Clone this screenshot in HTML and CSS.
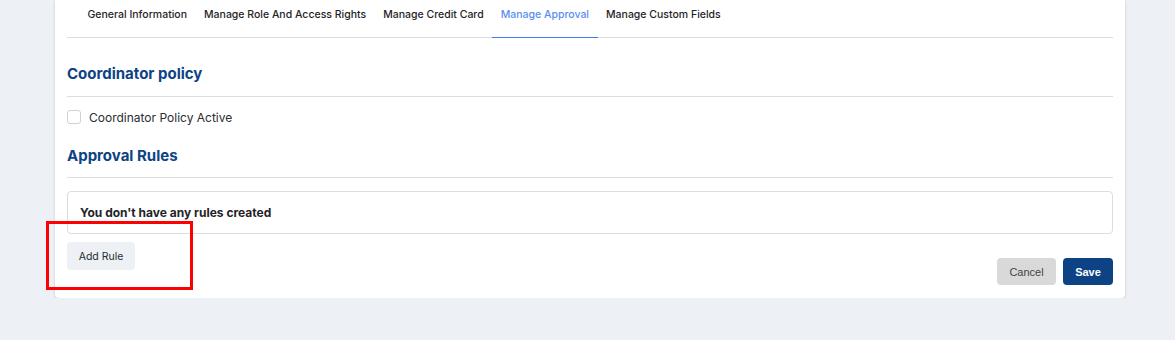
FILE: index.html
```html
<!DOCTYPE html>
<html lang="en">
<head>
    <meta charset="UTF-8">
    <meta name="viewport" content="width=device-width, initial-scale=1.0">
    <title>Manage Approval</title>
    <link rel="stylesheet" href="styles.css">
</head>
<body>
    <div class="card">
        <nav class="tabs">
            <a class="tab">General Information</a>
            <a class="tab">Manage Role And Access Rights</a>
            <a class="tab">Manage Credit Card</a>
            <a class="tab active">Manage Approval</a>
            <a class="tab">Manage Custom Fields</a>
        </nav>

        <section class="block">
            <h2 class="block-title">Coordinator policy</h2>
            <label class="check-row">
                <span class="checkbox"></span>
                <span>Coordinator Policy Active</span>
            </label>
        </section>

        <section class="block">
            <h2 class="block-title">Approval Rules</h2>
            <div class="empty-box">You don't have any rules created</div>
            <div class="highlight-wrap">
                <button class="btn-add">Add Rule</button>
                <div class="highlight"></div>
            </div>
        </section>

        <div class="actions">
            <button class="btn-cancel">Cancel</button>
            <button class="btn-save">Save</button>
        </div>
    </div>
</body>
</html>
```

FILE: styles.css
```css
body {
    margin: 0;
    padding: 0;
    background-color: #edf1f5;
    font-family: Inter, "Noto Sans", sans-serif;
    color: #1f2328;
}

.card {
    margin-left: 55px;
    width: 1046px;
    padding: 0 12px 13px 12px;
    background-color: #fff;
    border-radius: 0 0 4px 4px;
    box-shadow: 0 1px 3px rgba(0, 0, 0, 0.18);
}

.tabs {
    display: flex;
    height: 37px;
    padding-left: 12px;
    border-bottom: 1px solid #dcdde1;
}

.tab {
    display: flex;
    align-items: center;
    align-self: flex-end;
    height: 28px;
    padding: 0 8.5px 9px 8.5px;
    margin-bottom: -1px;
    font-size: 10.5px;
    font-weight: 500;
    color: #1f2328;
    border-bottom: 1px solid transparent;
}

.tab.active {
    color: #5b8def;
    border-bottom-color: #3b7ee8;
}

.block-title {
    margin: 0;
    padding: 26px 0 13px 0;
    font-size: 15px;
    font-weight: 700;
    color: #0d4384;
    border-bottom: 1px solid #dcdde1;
}

.block + .block .block-title {
    padding: 9px 0 12px 0;
}

.check-row {
    display: flex;
    align-items: center;
    gap: 8px;
    height: 40px;
    font-size: 12px;
    color: #2a2d31;
}

.checkbox {
    width: 12px;
    height: 12px;
    border: 1px solid #cfd3d8;
    border-radius: 3px;
    background: #fff;
}

.empty-box {
    margin-top: 13px;
    height: 41px;
    display: flex;
    align-items: center;
    padding-left: 12px;
    border: 1px solid #dcdde1;
    border-radius: 4px;
    font-size: 12px;
    font-weight: 700;
    color: #1f2328;
}

.highlight-wrap {
    position: relative;
    margin-top: 8px;
    width: 68px;
}

.btn-add {
    width: 68px;
    height: 28px;
    border: none;
    border-radius: 4px;
    background-color: #edf1f5;
    font-family: Inter, "Noto Sans", sans-serif;
    font-size: 10.5px;
    color: #2a2d31;
    padding: 0;
}

.highlight {
    position: absolute;
    left: -21px;
    top: -21px;
    width: 141px;
    height: 63px;
    border: 3px solid #ff0000;
}

.actions {
    display: flex;
    justify-content: flex-end;
    gap: 7px;
    margin-top: -12px;
}

.btn-cancel,
.btn-save {
    height: 27px;
    border: none;
    border-radius: 4px;
    font-family: "Liberation Sans", Arial, sans-serif;
    font-size: 11px;
    padding: 0;
}

.btn-cancel {
    width: 59px;
    background-color: #d9d9d9;
    color: #444;
}

.btn-save {
    width: 50px;
    background-color: #0d4384;
    color: #fff;
    font-weight: 700;
}
```
